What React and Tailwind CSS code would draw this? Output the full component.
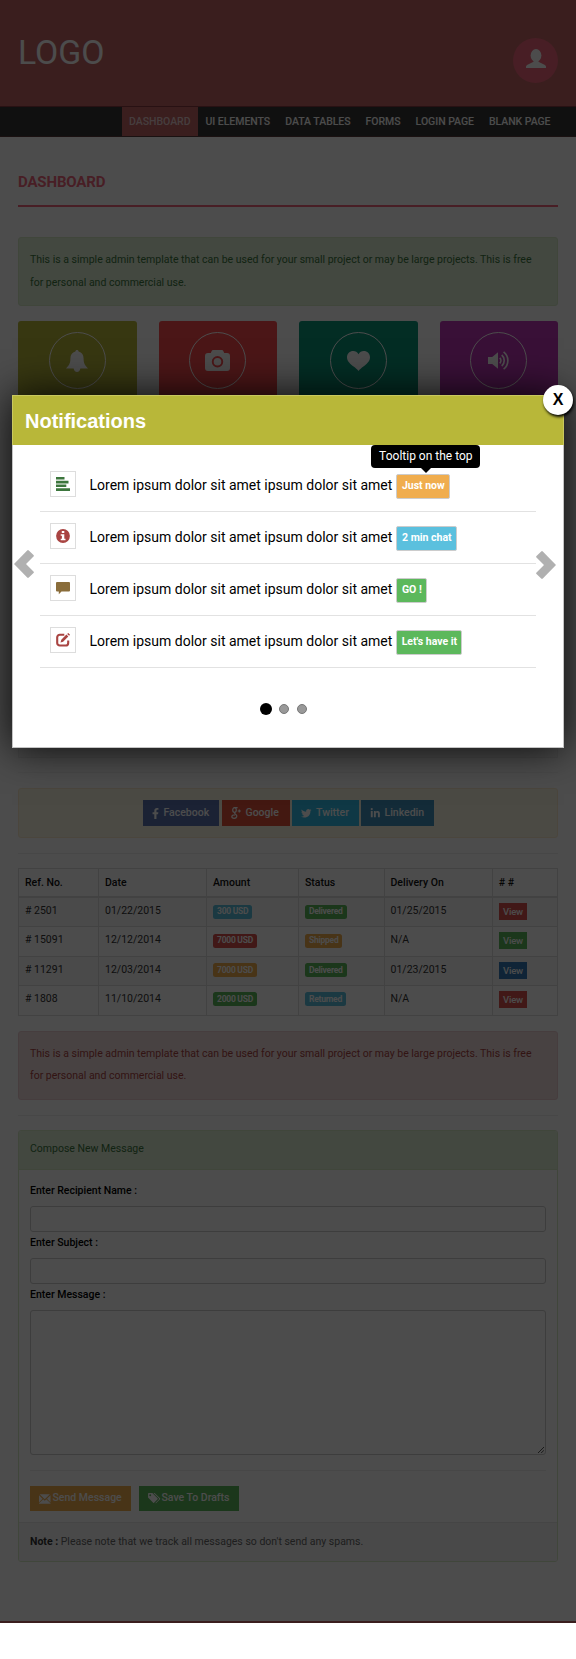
import React from "react";
import { FaFacebookF, FaTwitter, FaLinkedinIn } from "react-icons/fa";

function UserIcon({ className }) {
  return (
    <svg viewBox="0 0 20 19" className={className} fill="currentColor">
      <ellipse cx="10" cy="6.5" rx="5.4" ry="6.5" />
      <path d="M7.6 10v2.7L1.5 15.8C.5 16.4 0 17 0 17.8V19h20v-1.2c0-.8-.5-1.4-1.5-2l-6.1-3.1V10z" />
    </svg>
  );
}

function BellIcon({ className }) {
  return (
    <svg viewBox="0 0 22 22" className={className} fill="currentColor">
      <path d="M11 0C10 0 9.4.7 9.4 1.5 6 2.3 4.4 5 4.4 8.5c0 5-1.4 6.8-4.4 10h22c-3-3.2-4.4-5-4.4-10C17.6 5 16 2.3 12.6 1.5 12.6.7 12 0 11 0z" />
      <path d="M7.6 18h6.8c-.2 2.6-1.6 4-3.4 4s-3.2-1.4-3.4-4z" />
    </svg>
  );
}

function CameraIcon({ className }) {
  return (
    <svg viewBox="0 0 25 21" className={className} fill="currentColor" fillRule="evenodd">
      <path d="M8 0h9c.6 0 1 .4 1.300 1l.9 2H22a3 3 0 0 1 3 3v12a3 3 0 0 1-3 3H3a3 3 0 0 1-3-3V6a3 3 0 0 1 3-3h2.800l.9-2C7 .4 7.400 0 8 0zM12.500 6a5.700 5.700 0 1 0 0 11.400 5.700 5.700 0 0 0 0-11.400zM12.500 7.900a3.800 3.800 0 1 1 0 7.600 3.800 3.800 0 0 1 0-7.600z" />
    </svg>
  );
}

function HeartIcon({ className }) {
  return (
    <svg viewBox="0 0 23 20" className={className} fill="currentColor">
      <path d="M11.500 3.200C10.300 1.100 8.500 0 6.300 0 2.700 0 0 2.600 0 6.200c0 4.200 3.600 7 6.600 9.400 1.900 1.500 3.700 2.900 4.900 4.400 1.200-1.500 3-2.900 4.900-4.400 3-2.400 6.600-5.200 6.600-9.400C23 2.600 20.300 0 16.700 0c-2.200 0-4 1.100-5.200 3.200z" />
    </svg>
  );
}

function VolumeIcon({ className }) {
  return (
    <svg viewBox="0 0 22 19" className={className} fill="none" stroke="currentColor" strokeWidth="1.7">
      <path d="M0 6h4.200L10 1.200v16.600L4.200 13H0z" fill="currentColor" stroke="none" />
      <path d="M11.800 6.900a3.900 3.900 0 0 1 0 5.400M13.700 4a7.200 7.200 0 0 1 0 11M15.600.8a11 11 0 0 1 0 17.400" />
    </svg>
  );
}

function AlignLeftIcon() {
  return (
    <svg viewBox="0 0 14 14" className="size-[14px]" fill="#3c763d">
      <path d="M0 0h8.500v2.600H0zM0 3.800h12.500v2.600H0zM0 7.500h10.300v2.600H0zM0 11.300h14v2.600H0z" />
    </svg>
  );
}

function InfoIcon() {
  return (
    <svg viewBox="0 0 14 14" className="size-[14px]">
      <circle cx="7" cy="7" r="6.900" fill="#a94442" />
      <path d="M5.800 2h2.500v2.100H5.800zM4.700 5.200h3.600v4.500h1.200v1.500H4.700V9.700h1.200v-3H4.700z" fill="#fff" />
    </svg>
  );
}

function CommentIcon() {
  return (
    <svg viewBox="0 0 14 14" className="size-[14px]" fill="#8a6d3b">
      <path d="M1 1h12a1 1 0 0 1 1 1v7.500a1 1 0 0 1-1 1H5.500L2.800 13.300v-2.800H1a1 1 0 0 1-1-1V2a1 1 0 0 1 1-1z" />
    </svg>
  );
}

function EditIcon() {
  return (
    <svg viewBox="0 0 14 14" className="size-[14px]">
      <path d="M8.300 1.700H3.800a2.600 2.600 0 0 0-2.600 2.600v5.600a2.600 2.600 0 0 0 2.600 2.600h5.800a2.600 2.600 0 0 0 2.600-2.600V7.600" fill="none" stroke="#a94442" strokeWidth="2.100" />
      <path d="M10.400 1.600l1.900 1.900-5.200 5.200-2.600.8.800-2.700zM11.200.9l.7-.7q.3-.3.6 0l1.300 1.300q.3.300 0 .6l-.7.700z" fill="#a94442" />
    </svg>
  );
}

function GooglePlusIcon() {
  return (
    <svg viewBox="0 0 10 12" className="h-[12px] w-[10px]" fill="none" stroke="currentColor" strokeWidth="1.200">
      <ellipse cx="3.500" cy="3" rx="1.800" ry="2.300" />
      <path d="M3.400.6h3.200M3.900 5.300c-.8.800-.2 1.300.7 1.900 2.200 1.500 1.300 4.100-1.400 4.100-3.300 0-3.400-3.400.9-3.500M8.300 2.400v3.200M6.700 4h3.200" />
    </svg>
  );
}

function EnvelopeIcon() {
  return (
    <svg viewBox="0 0 12 10" className="h-[10px] w-[11.500px]" fill="currentColor">
      <path d="M.6 0h10.800L6 5.200zM0 1l3.700 3.700L0 8.600zM12 1v7.600L8.300 4.700zM4.400 5.300L6 6.800l1.600-1.500L12 9.500V10H0v-.5z" />
    </svg>
  );
}

function TagsIcon() {
  return (
    <svg viewBox="0 0 13 11" className="h-[10.500px] w-[12.500px]" fill="currentColor">
      <path fillRule="evenodd" d="M0 .8Q0 0 .8 0H4.500L10 5.600q.4.400 0 .9L6.300 10.300q-.5.400-.9 0L0 4.800zM2.300 1.300a1 1 0 1 0 0 2 1 1 0 0 0 0-2z" />
      <path d="M5.600 0h1.300l5.700 5.600q.4.400 0 .9l-4 4.100q-.5.400-.9-.1l3.600-3.800q.5-.6 0-1.100z" />
    </svg>
  );
}

function ChevronIcon({ className }) {
  return (
    <svg viewBox="0 0 20 28" className={className} fill="#b0b0b0">
      <path d="M0 14L13.200.5q.8-.8 1.600 0L19.500 5q.8.800 0 1.600L12 14l7.500 7.400q.8.800 0 1.600l-4.700 4.500q-.8.800-1.600 0z" />
    </svg>
  );
}

const navItems = ["DASHBOARD", "UI ELEMENTS", "DATA TABLES", "FORMS", "LOGIN PAGE", "BLANK PAGE"];

const cards = [
  { color: "bg-[#b8b739]", icon: <BellIcon className="size-[22px]" /> },
  { color: "bg-[#fa4b4f]", icon: <CameraIcon className="h-[21px] w-[25px]" /> },
  { color: "bg-[#0b967b]", icon: <HeartIcon className="h-[20px] w-[23px]" /> },
  { color: "bg-[#bf36b7]", icon: <VolumeIcon className="h-[19px] w-[22px]" /> },
];

const socials = [
  { name: "Facebook", color: "w-[76.500px] bg-[#5a72b0]", slot: "w-[12px]", icon: <FaFacebookF className="-ml-[2px] size-[11px]" /> },
  { name: "Google", color: "w-[68px] bg-[#e0523a]", slot: "w-[15px]", icon: <GooglePlusIcon /> },
  { name: "Twitter", color: "w-[66.500px] bg-[#33bde8]", slot: "w-[15px]", icon: <FaTwitter className="size-[10.500px]" /> },
  { name: "Linkedin", color: "w-[72.500px] bg-[#4191bd]", slot: "w-[14.500px]", icon: <FaLinkedinIn className="size-[10.500px]" /> },
];

const INFO = "bg-[#5bc0de]";
const DANGER = "bg-[#d9534f]";
const WARNING = "bg-[#f0ad4e]";
const SUCCESS = "bg-[#5cb85c]";

const orders = [
  ["# 2501", "01/22/2015", "300 USD", INFO, "Delivered", SUCCESS, "01/25/2015", DANGER],
  ["# 15091", "12/12/2014", "7000 USD", DANGER, "Shipped", WARNING, "N/A", SUCCESS],
  ["# 11291", "12/03/2014", "7000 USD", WARNING, "Delivered", SUCCESS, "01/23/2015", "bg-[#337ab7]"],
  ["# 1808", "11/10/2014", "2000 USD", SUCCESS, "Returned", INFO, "N/A", DANGER],
];

const notices = [
  { icon: <AlignLeftIcon />, badge: "Just now", color: "w-[54px] bg-[#f0ad4e]", tooltip: "Tooltip on the top" },
  { icon: <InfoIcon />, badge: "2 min chat", color: "w-[61px] bg-[#5bc0de]" },
  { icon: <CommentIcon />, badge: "GO !", color: "w-[31px] bg-[#5cb85c]" },
  { icon: <EditIcon />, badge: "Let's have it", color: "w-[66px] bg-[#5cb85c]" },
];

const COLS = "grid grid-cols-[79px_108px_92px_85.500px_108.200px_1fr]";

function Alert({ className }) {
  return (
    <div className={`h-[69px] rounded-[3px] border px-[11px] py-[11px] ${className}`}>
      This is a simple admin template that can be used for your small project or may be large projects. This is free for
      personal and commercial use.
    </div>
  );
}

function Tag({ color, children }) {
  return (
    <span className={`mt-[1px] inline-flex h-[14px] items-center rounded-[2.500px] px-[4px] text-[8.500px] font-bold tracking-[-0.25px] text-white ${color}`}>
      {children}
    </span>
  );
}

function Page() {
  return (
    <div className="h-[1623px] overflow-hidden border-b-2 border-[#c16467] bg-white">
      <header className="flex h-[107px] items-start justify-between border-b border-[#863b40] bg-[#c16467] px-[18px] text-white">
        <div className="mt-[36px] text-[33.750px] leading-[34.500px]">LOGO</div>
        <div className="mt-[38px] flex h-[45px] w-[45px] justify-center rounded-full bg-[#f0677c] pt-[11px]">
          <UserIcon className="h-[19px] w-[20px]" />
        </div>
      </header>
      <nav className="flex h-[29.500px] justify-end border-b border-[#863b40]/40 bg-[#383838] pr-[18px] text-[10.500px] leading-[29px] font-medium tracking-[-0.035px] text-white">
        {navItems.map((label, i) => (
          <a key={label} className={`px-[7.500px] ${i === 0 ? "bg-[#c16467] text-white/70" : ""}`}>
            {label}
          </a>
        ))}
      </nav>
      <main className="px-[18px] pt-[34.500px]">
        <h1 className="mb-[30px] h-[36px] border-b-2 border-[#f0677c] text-[15px] leading-[22.500px] font-bold tracking-[-0.15px] text-[#f0677c]">
          DASHBOARD
        </h1>
        <Alert className="border-[#d6e9c6] bg-[#dff0d8] text-[#3c763d]" />
        <div className="mt-[15px] flex h-[437px] flex-col justify-between">
          <div className="grid grid-cols-4 gap-[22px]">
            {cards.map((card) => (
              <div key={card.color} className={`flex h-[130px] justify-center rounded-[3px] pt-[11px] ${card.color}`}>
                <div className="flex h-[57px] w-[57px] items-center justify-center rounded-full border-[1.500px] border-white text-white">
                  {card.icon}
                </div>
              </div>
            ))}
          </div>
          <div className="h-[60px] border border-[#eee] bg-[#f9f9f9]" />
        </div>
        <hr className="mt-[14px] border-[#f4f4f4]" />
        <div className="mt-[15px] flex h-[50px] items-center justify-center gap-[2.500px] rounded-[3px] border border-[#faebcc] bg-[#fcf8e3]">
          {socials.map((s) => (
            <a key={s.name} className={`flex h-[25.500px] items-center pl-[9px] leading-none font-medium text-white ${s.color}`}>
              <span className={s.slot}>{s.icon}</span>
              {s.name}
            </a>
          ))}
        </div>
        <hr className="mt-[15px] border-[#eee]" />
        <div className="mt-[14px] border border-[#ddd] leading-[15px]">
          <div className={`${COLS} h-[29px] border-b-2 border-[#ddd] font-medium text-[#111]`}>
            {["Ref. No.", "Date", "Amount", "Status", "Delivery On", "# #"].map((h, i) => (
              <div key={h} className={`px-[6px] pt-[6px] ${i ? "border-l border-[#ddd]" : ""}`}>
                {h}
              </div>
            ))}
          </div>
          {orders.map((o, i) => (
            <div
              key={o[0]}
              className={`${COLS} h-[29.250px] ${i < 3 ? "border-b border-[#ddd]" : ""} ${i % 2 ? "" : "bg-[#f9f9f9]"} *:border-[#ddd] *:px-[6px] *:pt-[5px]`}
            >
              <div>{o[0]}</div>
              <div className="border-l">{o[1]}</div>
              <div className="border-l">
                <Tag color={o[3]}>{o[2]}</Tag>
              </div>
              <div className="border-l">
                <Tag color={o[5]}>{o[4]}</Tag>
              </div>
              <div className="border-l">{o[6]}</div>
              <div className="border-l">
                <a className={`flex h-[17px] w-[28.500px] items-center justify-center text-[9.500px] font-medium tracking-[-0.2px] text-white ${o[7]}`}>
                  View
                </a>
              </div>
            </div>
          ))}
        </div>
        <Alert className="mt-[14.500px] border-[#ebccd1] bg-[#f2dede] text-[#a94442]" />
        <hr className="mt-[15px] border-[#eee]" />
        <section className="mt-[14px] h-[432px] overflow-hidden rounded-[3px] border border-[#d6e9c6]">
          <div className="h-[39px] border-b border-[#d6e9c6] bg-[#dff0d8] px-[11px] py-[7.500px] text-[#3c763d]">
            Compose New Message
          </div>
          <div className="px-[11px] pt-[10.500px] pb-[11px] font-medium text-black">
            <label className="block">Enter Recipient Name :</label>
            <div className="mt-[3.750px] h-[25.500px] rounded-[3px] border border-[#ccc]" />
            <label className="block">Enter Subject :</label>
            <div className="mt-[3.750px] h-[25.500px] rounded-[3px] border border-[#ccc]" />
            <label className="block">Enter Message :</label>
            <div className="mt-[3.750px] flex h-[145px] items-end justify-end rounded-[3px] border border-[#ccc] p-px">
              <svg viewBox="0 0 6 6" className="size-[6px]" stroke="#444" strokeWidth=".9">
                <path d="M0 6L6 0M3.200 6L6 3.200" />
              </svg>
            </div>
            <hr className="mt-[15px] border-[#eee]" />
            <div className="mt-[15px] flex gap-[7.500px] leading-none font-medium text-white">
              <a className="flex h-[25.500px] w-[101px] items-center gap-[2px] bg-[#f0ad4e] pl-[9px]">
                <EnvelopeIcon />
                Send Message
              </a>
              <a className="flex h-[25.500px] w-[100.500px] items-center gap-px bg-[#5cb85c] pl-[9.500px]">
                <TagsIcon />
                Save To Drafts
              </a>
            </div>
          </div>
          <footer className="h-[39px] border-t border-[#e6e6e6] bg-[#f5f5f5] px-[11px] py-[7.500px] text-[#666]">
            <b className="font-bold text-[#333]">Note :</b> Please note that we track all messages so don't send any spams.
          </footer>
        </section>
      </main>
    </div>
  );
}

function NotificationsModal() {
  return (
    <div className="relative h-[353px] border border-[#c4c4c4] bg-white shadow-[0_0_38px_rgba(0,0,0,0.9)]">
      <div className="-mx-px -mt-px h-[50px] border border-b-0 border-[#c9c85f] bg-[#b8b739] pl-[12px] font-['Liberation_Sans',sans-serif] text-[20px] leading-[50px] font-bold text-white">
        Notifications
      </div>
      <button className="absolute -top-[11px] -right-[10px] size-[30px] rounded-full bg-white text-center font-['Liberation_Sans',sans-serif] text-[16px] leading-[30px] font-bold text-black shadow-[1px_2px_3px_#000]">
        X
      </button>
      <div className="flex items-center pt-[14.500px] pl-px">
        <ChevronIcon className="mr-[6px] h-[28px] w-[20px]" />
        <ul className="w-[496px] text-[14px] text-black">
          {notices.map((n) => (
            <li key={n.badge} className="flex h-[52px] items-center border-b border-[#e2e2e2] pl-[10px]">
              <span className="mb-[2px] flex size-[26px] items-center border border-[#ddd] pl-[5px]">{n.icon}</span>
              <span className="ml-[13.500px] leading-[51px]">Lorem ipsum dolor sit amet ipsum dolor sit amet</span>
              <span
                className={`relative mt-[3px] ml-[4px] flex h-[25px] items-center justify-center rounded-[2px] border border-[#ccc] text-[10.500px] font-bold whitespace-nowrap text-white ${n.color}`}
              >
                {n.badge}
                {n.tooltip && (
                  <span className="absolute -top-[30px] -left-[26px] flex h-[23px] w-[109px] items-center justify-center rounded-[4px] bg-black text-[12px] font-normal">
                    {n.tooltip}
                    <svg viewBox="0 0 10 5" className="absolute top-[23px] left-[50px] h-[5px] w-[10px]">
                      <path d="M0 0h10L5 5z" />
                    </svg>
                  </span>
                )}
              </span>
            </li>
          ))}
        </ul>
        <ChevronIcon className="mt-[2px] h-[28px] w-[20px] rotate-180" />
      </div>
      <div className="mt-[35.500px] flex items-center justify-center gap-[8px] pr-[9px]">
        <span className="-mr-px size-[12px] rounded-full bg-black" />
        <span className="size-[10px] rounded-full border border-[#777] bg-[#999]" />
        <span className="size-[10px] rounded-full border border-[#777] bg-[#999]" />
      </div>
    </div>
  );
}

export default function App() {
  return (
    <div className="relative h-[1659px] w-[576px] overflow-hidden bg-white font-[Roboto,sans-serif] text-[10.500px] leading-[22.500px] text-[#333]">
      <Page />
      <div className="absolute inset-x-0 top-0 h-[1623px] bg-black/70 px-[12px] pt-[395px]">
        <NotificationsModal />
      </div>
    </div>
  );
}
